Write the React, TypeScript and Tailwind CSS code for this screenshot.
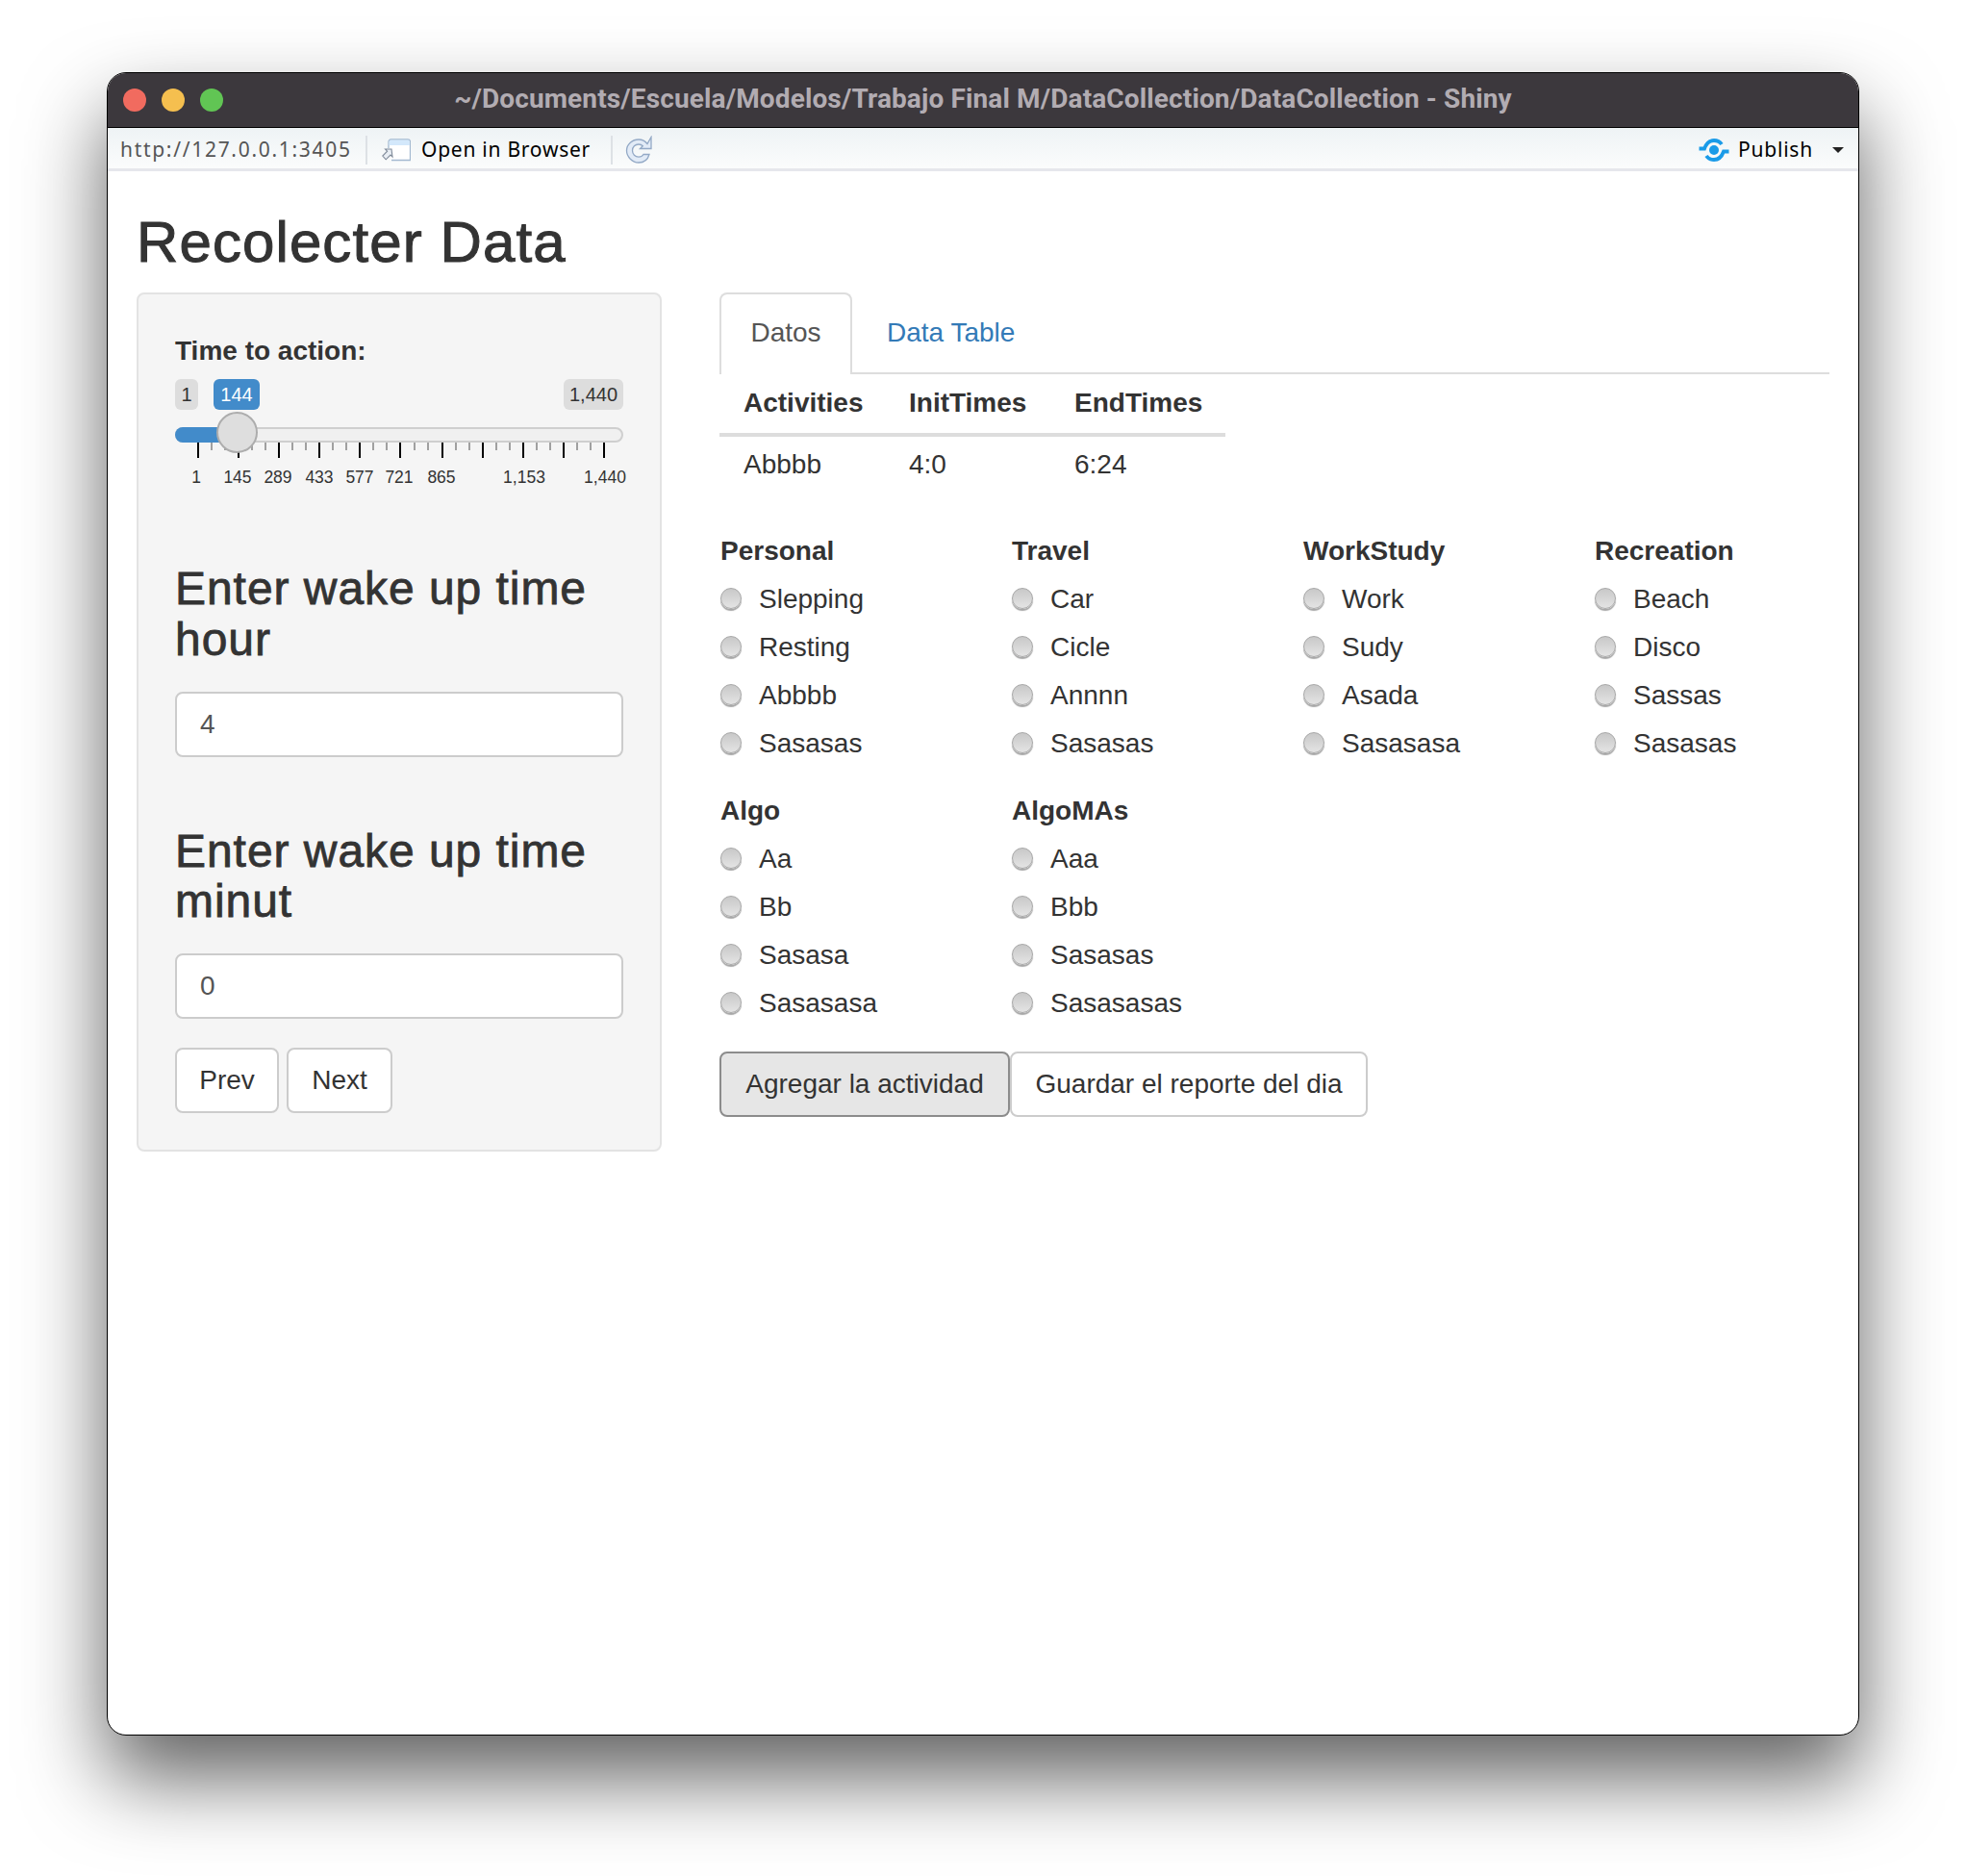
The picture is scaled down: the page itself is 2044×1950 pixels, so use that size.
const majorTicks = [23, 65, 107, 149, 191, 233, 277, 319, 361, 403, 445];
const minorTicks = [37, 51, 79, 93, 121, 135, 163, 177, 205, 219, 248, 262, 291, 305, 333, 347, 375, 389, 417, 431];
const tickLabels = [
  { text: "1", x: 22 },
  { text: "145", x: 65 },
  { text: "289", x: 107 },
  { text: "433", x: 150 },
  { text: "577", x: 192 },
  { text: "721", x: 233 },
  { text: "865", x: 277 },
  { text: "1,153", x: 363 },
  { text: "1,440", x: 447 },
];

const groups = [
  { title: "Personal", options: ["Slepping", "Resting", "Abbbb", "Sasasas"] },
  { title: "Travel", options: ["Car", "Cicle", "Annnn", "Sasasas"] },
  { title: "WorkStudy", options: ["Work", "Sudy", "Asada", "Sasasasa"] },
  { title: "Recreation", options: ["Beach", "Disco", "Sassas", "Sasasas"] },
  { title: "Algo", options: ["Aa", "Bb", "Sasasa", "Sasasasa"] },
  { title: "AlgoMAs", options: ["Aaa", "Bbb", "Sasasas", "Sasasasas"] },
];

function OpenIcon() {
  return (
    <svg width="30" height="24" viewBox="0 0 30 24" fill="none">
      <path d="M7 10V3.5C7 2 8 1 9.5 1H27C28.5 1 29.5 2 29.5 3.5V22.5H10" fill="#fff" stroke="#a3b9d0" strokeWidth="1.3" />
      <path d="M7.6 7V3.5C7.6 2 8.4 1.6 9.5 1.6H27C28.2 1.6 28.9 2.2 28.9 3.5V7Z" fill="#d3e8fb" />
      <path d="M10 11H3.5L5.6 13.2L0.8 18L4.2 21.8L9 17L11 19Z" fill="#e9eef4" stroke="#7f8a99" strokeWidth="1.1" />
    </svg>
  );
}

function RefreshIcon() {
  return (
    <svg width="30" height="30" viewBox="0 0 30 30" fill="none">
      <path
        d="M24 8.5C21.8 5.5 18.8 4 15 4C8.5 4 2.5 9 2.5 15.5C2.5 22 8.5 28 15 28C20 28 24.5 25 26 19.5H20C19 21.3 17.2 22.2 15 22.2C11.3 22.2 8.5 19.3 8.5 15.5C8.5 11.7 11.3 9 15 9C16.8 9 18.2 9.6 19.3 10.8L16.5 13.5H28V1.5Z"
        fill="#e2ebf7"
        stroke="#93a9c6"
        strokeWidth="1.3"
      />
    </svg>
  );
}

function PublishIcon() {
  return (
    <svg width="32" height="24" viewBox="0 0 32 24" fill="none">
      <circle cx="16" cy="12" r="5" fill="#1a9be8" />
      <path d="M0.5 10.5H6C8 5 11 2 16 2C20 2 22.5 3.8 24 6" stroke="#1a9be8" strokeWidth="3.8" />
      <path d="M31.5 13.5H26C24 19 21 22 16 22C12 22 9.5 20.2 8 18" stroke="#1a9be8" strokeWidth="3.8" />
    </svg>
  );
}

function Slider() {
  return (
    <div className="relative h-[201px] w-[466px]">
      <span className="absolute left-0 top-[9px] flex h-[32px] w-[24px] items-center justify-center rounded-[6px] bg-[#dddddd] text-[20px] text-[#333]">1</span>
      <span className="absolute left-[40px] top-[9px] flex h-[32px] w-[48px] items-center justify-center rounded-[6px] bg-[#428bca] text-[20px] text-white">144</span>
      <span className="absolute right-0 top-[9px] flex h-[32px] w-[62px] items-center justify-center rounded-[6px] bg-[#dddddd] text-[20px] text-[#333]">1,440</span>
      <div className="absolute left-0 right-0 top-[59px] h-[16px] rounded-[8px] border-2 border-[#cfcfcf] bg-[#f0f0f0]" />
      <div className="absolute left-0 top-[59px] h-[16px] w-[64px] rounded-l-[8px] bg-[#428bca]" />
      {minorTicks.map((x) => (
        <div key={x} className="absolute top-[75px] h-[8px] w-[2px] bg-[#a0a0a0]" style={{ left: x }} />
      ))}
      {majorTicks.map((x) => (
        <div key={x} className="absolute top-[75px] h-[16px] w-[2px] bg-black" style={{ left: x }} />
      ))}
      <div className="absolute left-[43px] top-[43px] h-[43px] w-[43px] rounded-full border-2 border-[#adadad] bg-[#dedede]" />
      {tickLabels.map((l) => (
        <span key={l.text} className="absolute top-[100px] w-[60px] -translate-x-1/2 text-center text-[17.5px] leading-[22px] text-[#333]" style={{ left: l.x }}>
          {l.text}
        </span>
      ))}
    </div>
  );
}

function NumberField({ title, value }: { title: [string, string]; value: string }) {
  return (
    <div>
      <h3 className="text-[48px] font-medium leading-[52.8px] tracking-[0.95px] text-[#333] [-webkit-text-stroke:0.8px_#333]">
        {title[0]}
        <br />
        {title[1]}
      </h3>
      <input
        readOnly
        value={value}
        className="mt-[27px] block h-[68px] w-full rounded-[8px] border-2 border-[#cccccc] bg-white px-[24px] text-[28px] text-[#555] outline-none"
      />
    </div>
  );
}

function RadioGroup({ title, options }: { title: string; options: string[] }) {
  return (
    <div>
      <div className="mb-[5px] text-[28px] font-bold leading-[40px] text-[#333]">{title}</div>
      {options.map((o, i) => (
        <div key={i} className="flex h-[50px] items-center gap-[18px] text-[28px] text-[#333]">
          <span className="-mt-[2px] h-[22px] w-[22px] rounded-full border border-[#a8a8a8] bg-gradient-to-b from-[#c8c8c8] to-[#e4e4e4] shadow-[0_2px_1px_rgba(0,0,0,0.35)]" />
          {o}
        </div>
      ))}
    </div>
  );
}

export default function App() {
  return (
    <div className="h-[1950px] w-[2044px] overflow-hidden bg-white pl-[111px] pt-[75px] font-['Liberation_Sans',Arial,sans-serif]">
      <div className="flex h-[1729px] w-[1822px] flex-col overflow-hidden rounded-[20px] border border-black bg-white shadow-[0_44px_85px_rgba(0,0,0,0.62)]">
        {/* title bar */}
        <div className="grid h-[57px] shrink-0 grid-cols-[1fr_auto_1fr] items-center border-b border-black bg-[#3c383d]">
          <div className="flex gap-[16px] pl-[16px]">
            <span className="h-[24px] w-[24px] rounded-full bg-[#f16b5f]" />
            <span className="h-[24px] w-[24px] rounded-full bg-[#f5bf4f]" />
            <span className="h-[24px] w-[24px] rounded-full bg-[#61c554]" />
          </div>
          <div className="-mt-[2px] font-['Roboto',sans-serif] text-[28px] font-bold tracking-[0.13px] text-[#b2acb2]">
            ~/Documents/Escuela/Modelos/Trabajo Final M/DataCollection/DataCollection - Shiny
          </div>
          <div />
        </div>

        {/* toolbar */}
        <div className="flex h-[45px] shrink-0 items-center border-b-[3px] border-[#e6e7ec] bg-gradient-to-b from-[#eef3f5] to-[#fbfcfc] pl-[13px] pr-[15px] pt-[3px] font-['Noto_Sans',sans-serif] text-[21px]">
          <span className="w-[255px] tracking-[1.7px] text-[#555]">http://127.0.0.1:3405</span>
          <span className="h-[30px] w-[2px] bg-[#dde1e5]" />
          <span className="ml-[15px] flex"><OpenIcon /></span>
          <span className="ml-[11px] w-[197px] tracking-[0.75px] text-black">Open in Browser</span>
          <span className="h-[30px] w-[2px] bg-[#dde1e5]" />
          <span className="ml-[12px] flex"><RefreshIcon /></span>
          <div className="ml-auto flex items-center">
            <PublishIcon />
            <span className="ml-[9px] tracking-[0.8px] text-black">Publish</span>
            <span className="ml-[20px] h-0 w-0 border-x-[6px] border-t-[6px] border-x-transparent border-t-[#222]" />
          </div>
        </div>

        <div className="px-[30px] pt-[41px]">
          <h2 className="mb-[19px] text-[60px] font-medium leading-[66px] tracking-[1.1px] text-[#333] [-webkit-text-stroke:1px_#333]">Recolecter Data</h2>

          <div className="flex items-start gap-[60px]">
            {/* sidebar */}
            <div className="h-[893px] w-[546px] shrink-0 rounded-[8px] border-2 border-[#e3e3e3] bg-[#f5f5f5] px-[38px] pt-[39px]">
              <div className="text-[28px] font-bold leading-[40px] text-[#333]">Time to action:</div>
              <Slider />
              <NumberField title={["Enter wake up time", "hour"]} value="4" />
              <div className="mt-[72px]">
                <NumberField title={["Enter wake up time", "minut"]} value="0" />
              </div>
              <div className="mt-[30px] flex gap-[8px]">
                <button className="h-[68px] w-[108px] rounded-[8px] border-2 border-[#cccccc] bg-white text-[28px] text-[#333]">Prev</button>
                <button className="h-[68px] w-[110px] rounded-[8px] border-2 border-[#cccccc] bg-white text-[28px] text-[#333]">Next</button>
              </div>
            </div>

            {/* main */}
            <div className="min-w-0 flex-1">
              <div className="flex h-[85px] items-stretch border-b-2 border-[#dddddd] text-[28px]">
                <div className="-mb-[2px] flex w-[138px] items-center justify-center rounded-t-[8px] border-2 border-b-0 border-[#dddddd] bg-white pb-[3px] text-[#555]">Datos</div>
                <div className="ml-[4px] flex items-center px-[32px] text-[#337ab7]">Data Table</div>
              </div>

              <table className="w-[526px] table-fixed text-left text-[28px] text-[#333]">
                <thead>
                  <tr className="h-[63px] border-b-4 border-[#dddddd]">
                    <th className="w-[172px] pb-[2px] pl-[25px] font-bold">Activities</th>
                    <th className="w-[172px] pb-[2px] pl-[25px] font-bold">InitTimes</th>
                    <th className="pb-[2px] pl-[25px] font-bold">EndTimes</th>
                  </tr>
                </thead>
                <tbody>
                  <tr className="h-[62px]">
                    <td className="pb-[2px] pl-[25px]">Abbbb</td>
                    <td className="pb-[2px] pl-[25px]">4:0</td>
                    <td className="pb-[2px] pl-[25px]">6:24</td>
                  </tr>
                </tbody>
              </table>

              <div className="ml-[1px] mt-[39px] grid w-[1212px] grid-cols-4 gap-y-[25px]">
                {groups.map((g) => (
                  <RadioGroup key={g.title} title={g.title} options={g.options} />
                ))}
              </div>

              <div className="mt-[25px] flex text-[28px] text-[#333]">
                <button className="h-[68px] w-[302px] rounded-[8px] border-2 border-[#8c8c8c] bg-[#e6e6e6]">Agregar la actividad</button>
                <button className="h-[68px] w-[372px] rounded-[8px] border-2 border-[#cccccc] bg-white">Guardar el reporte del dia</button>
              </div>
            </div>
          </div>
        </div>
      </div>
    </div>
  );
}
